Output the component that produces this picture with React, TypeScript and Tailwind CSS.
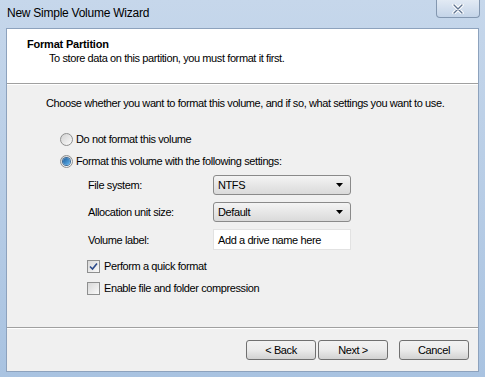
import React from "react";

const font = { fontFamily: '"Liberation Sans", Arial, sans-serif' };

function Radio({ checked }: { checked?: boolean }) {
    return (
        <span className="flex h-[13px] w-[13px] items-center justify-center rounded-full border border-[#8e8f8f] bg-gradient-to-br from-[#d2d2d2] to-[#fbfbfb]">
            {checked && <span className="h-[7px] w-[7px] rounded-full bg-gradient-to-br from-[#1c5f9f] to-[#63b5ee] ring-1 ring-[#3c6a96]" />}
        </span>
    );
}

function Checkbox({ checked }: { checked?: boolean }) {
    return (
        <span className="flex h-[13px] w-[13px] items-center justify-center border border-[#8e8f8f] bg-gradient-to-br from-[#d8d8d8] to-[#fafafa]">
            {checked && (
                <svg width="9" height="9" viewBox="0 0 9 9">
                    <path d="M1 4.5 L3.5 7 L8 1.5" stroke="#2c4a8a" strokeWidth="1.6" fill="none" />
                </svg>
            )}
        </span>
    );
}

function Select({ value }: { value: string }) {
    return (
        <div className="flex h-[20px] w-[138px] items-center justify-between rounded-[3px] border border-[#8a8a8a] bg-gradient-to-b from-[#f4f4f4] to-[#dadada] pl-[4px] pr-[7px] text-black">
            <span>{value}</span>
            <svg width="7" height="4" viewBox="0 0 7 4">
                <path d="M0 0 H7 L3.5 4 Z" fill="#000" />
            </svg>
        </div>
    );
}

function Button({ label }: { label: string }) {
    return (
        <div className="flex h-[20px] w-[70px] items-center justify-center rounded-[3px] border border-[#707070] bg-gradient-to-b from-[#f2f2f2] via-[#ebebeb] to-[#d2d2d2] text-black">
            {label}
        </div>
    );
}

export default function App() {
    return (
        <div className="flex h-[377px] w-[485px] flex-col bg-gradient-to-b from-[#c6d7eb] to-[#a9c3e1] text-[11px] leading-[14px] tracking-[-0.4px]" style={font}>
            {/* Title bar */}
            <div className="flex h-[28px] items-start justify-between pl-[7px]">
                <span className="pt-[6px] text-[12px] tracking-[-0.25px] text-black">New Simple Volume Wizard</span>
                <div className="mr-[5px] flex h-[18px] w-[44px] items-center justify-center rounded-b-[4px] border border-t-0 border-[#8397b0] bg-gradient-to-b from-[#e2eaf4] to-[#c4d4e8]">
                    <svg width="12" height="10" viewBox="0 0 12 10">
                        <path d="M2 1 L10 9 M10 1 L2 9" stroke="#ffffff" strokeWidth="3.4" strokeLinecap="round" />
                        <path d="M2 1 L10 9 M10 1 L2 9" stroke="#5f7390" strokeWidth="1.3" strokeLinecap="round" />
                    </svg>
                </div>
            </div>

            {/* Client area */}
            <div className="mx-[6px] mb-[5px] flex flex-1 flex-col border border-[#8da2bd] bg-[#f0f0f0] text-black">
                {/* Header */}
                <div className="flex h-[55px] flex-col border-b border-[#a0a0a0] bg-white pl-[20px] pt-[8px]">
                    <span className="font-bold tracking-[-0.2px]">Format Partition</span>
                    <span className="pl-[22px]">To store data on this partition, you must format it first.</span>
                </div>
                <div className="h-px bg-white" />

                {/* Body */}
                <div className="flex flex-1 flex-col pl-[39px] pt-[11px]">
                    <span>Choose whether you want to format this volume, and if so, what settings you want to use.</span>

                    <div className="mt-[22px] flex flex-col gap-[8px] pl-[14px]">
                        <label className="flex items-center gap-[3px]">
                            <Radio />
                            <span>Do not format this volume</span>
                        </label>
                        <label className="flex items-center gap-[3px]">
                            <Radio checked />
                            <span>Format this volume with the following settings:</span>
                        </label>
                    </div>

                    <div className="mt-[7px] grid grid-cols-[125px_138px] items-center gap-y-[7px] pl-[42px]">
                        <span>File system:</span>
                        <Select value="NTFS" />
                        <span>Allocation unit size:</span>
                        <Select value="Default" />
                        <span>Volume label:</span>
                        <div className="flex h-[21px] w-[138px] items-center border border-[#e2e2e2] bg-white pl-[4px]">
                            Add a drive name here
                        </div>
                    </div>

                    <div className="mt-[9px] flex flex-col gap-[8px] pl-[41px]">
                        <label className="flex items-center gap-[4px]">
                            <Checkbox checked />
                            <span>Perform a quick format</span>
                        </label>
                        <label className="flex items-center gap-[4px]">
                            <Checkbox />
                            <span>Enable file and folder compression</span>
                        </label>
                    </div>
                </div>

                {/* Footer */}
                <div className="h-px bg-[#a0a0a0]" />
                <div className="h-px bg-white" />
                <div className="flex h-[42px] items-center justify-end pr-[9px]">
                    <div className="flex gap-[2px]">
                        <Button label="< Back" />
                        <Button label="Next >" />
                    </div>
                    <div className="ml-[11px]">
                        <Button label="Cancel" />
                    </div>
                </div>
            </div>
        </div>
    );
}
